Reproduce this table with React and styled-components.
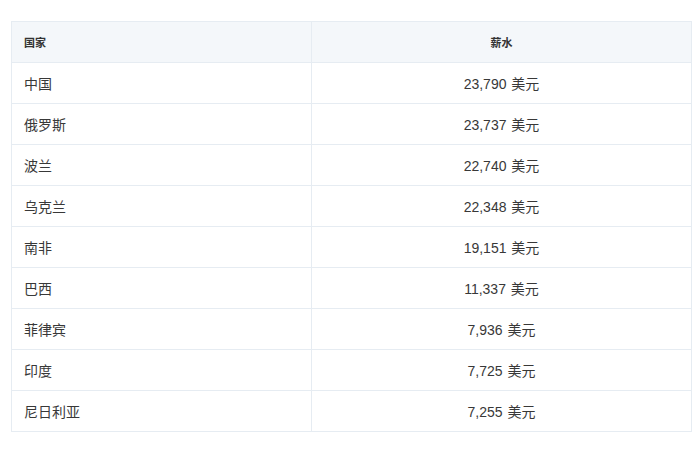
import React from 'react'
import styled, { createGlobalStyle } from 'styled-components'

const rows = [
  ['中国', '23,790 美元'],
  ['俄罗斯', '23,737 美元'],
  ['波兰', '22,740 美元'],
  ['乌克兰', '22,348 美元'],
  ['南非', '19,151 美元'],
  ['巴西', '11,337 美元'],
  ['菲律宾', '7,936 美元'],
  ['印度', '7,725 美元'],
  ['尼日利亚', '7,255 美元'],
]

const Global = createGlobalStyle`
  body{
    margin:0;
    background:#fff;
    font-family: "Liberation Sans", "Noto Sans CJK SC", sans-serif;
  }
`

const Page = styled.div`
  padding:21px 9px 0 11px;
`

const Table = styled.table`
  width:681px;
  border-collapse: collapse;
  table-layout: fixed;
  color:#333;
`

const Head = styled.th`
  height:40px;
  padding:0 12px;
  background:#f4f7fa;
  border:1px solid #e6ecf2;
  font-size:11px;
  font-weight:700;
  color:#333;
  text-align:${p => p.$align || 'left'};
  width:${p => p.$width || 'auto'};
`

const Cell = styled.td`
  height:40px;
  padding:0 12px;
  border:1px solid #e6ecf2;
  font-size:14px;
  color:#383838;
  text-align:${p => p.$align || 'left'};
  word-spacing:1px;
`

const App = () => {
  return <Page>
    <Global />
    <Table>
      <thead>
        <tr>
          <Head $width='275px'>国家</Head>
          <Head $align='center'>薪水</Head>
        </tr>
      </thead>
      <tbody>
        {rows.map(([country, pay]) => <tr key={country}>
          <Cell>{country}</Cell>
          <Cell $align='center'>{pay}</Cell>
        </tr>)}
      </tbody>
    </Table>
  </Page>
}

export default App
